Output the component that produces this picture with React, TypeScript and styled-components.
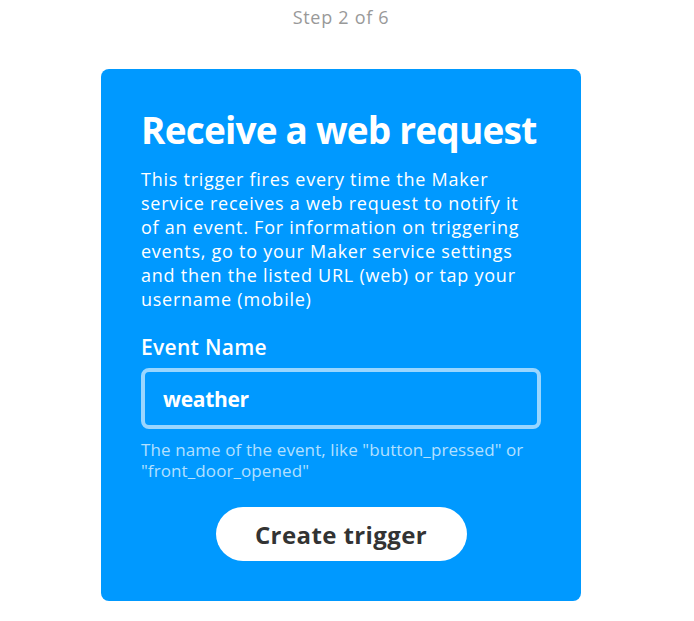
import React from 'react';
import styled, { createGlobalStyle } from 'styled-components';

const GlobalStyle = createGlobalStyle`
  html, body {
    margin: 0;
    padding: 0;
    background: #ffffff;
  }
  body {
    font-family: "Open Sans", Lato, sans-serif;
    -webkit-font-smoothing: antialiased;
  }
`;

const Page = styled.div`
  display: flex;
  flex-direction: column;
  align-items: center;
  width: 682px;
`;

const StepLabel = styled.div`
  color: #999999;
  font-size: 18px;
  font-weight: 500;
  letter-spacing: 0.7px;
  line-height: 24px;
  padding-top: 5px;
  height: 69px;
  box-sizing: border-box;
`;

const Card = styled.div`
  box-sizing: border-box;
  width: 480px;
  background: #0099ff;
  border-radius: 8px;
  padding: 40px 40px 40px;
  color: #ffffff;
  display: flex;
  flex-direction: column;
`;

const Title = styled.h1`
  margin: 0;
  font-size: 37px;
  font-weight: 700;
  line-height: 42px;
  letter-spacing: -0.8px;
`;

const Description = styled.p`
  margin: 16px 0 0;
  font-size: 18px;
  font-weight: 500;
  letter-spacing: 0.75px;
  line-height: 24px;
`;

const FieldLabel = styled.label`
  display: block;
  margin-top: 22px;
  font-size: 21px;
  font-weight: 600;
  letter-spacing: 0.3px;
  line-height: 28px;
`;

const Input = styled.input`
  box-sizing: border-box;
  margin-top: 7px;
  width: 400px;
  height: 61px;
  border: 4px solid #99d6ff;
  border-radius: 8px;
  background: #0099ff;
  color: #ffffff;
  font-family: inherit;
  font-size: 21px;
  font-weight: 700;
  letter-spacing: -0.3px;
  padding: 0 18px;
  outline: none;
`;

const Hint = styled.p`
  margin: 10px 0 0;
  color: #b3e0ff;
  font-size: 17px;
  letter-spacing: 0.1px;
  line-height: 21px;
`;

const Actions = styled.div`
  display: flex;
  justify-content: center;
  margin-top: 26px;
`;

const PrimaryButton = styled.button`
  box-sizing: border-box;
  width: 251px;
  height: 54px;
  border: none;
  border-radius: 27px;
  background: #ffffff;
  color: #333333;
  font-family: inherit;
  font-size: 24px;
  font-weight: 700;
  letter-spacing: 0.4px;
  cursor: pointer;
`;

export default function App(): JSX.Element {
  return (
    <>
      <GlobalStyle />
      <Page>
        <StepLabel>Step 2 of 6</StepLabel>
        <Card>
          <Title>Receive a web request</Title>
          <Description>
            This trigger fires every time the Maker service receives a web
            request to notify it of an event. For information on triggering
            events, go to your Maker service settings and then the listed URL
            (web) or tap your username (mobile)
          </Description>
          <FieldLabel>Event Name</FieldLabel>
          <Input defaultValue="weather" />
          <Hint>
            The name of the event, like "button_pressed" or
            "front_door_opened"
          </Hint>
          <Actions>
            <PrimaryButton>Create trigger</PrimaryButton>
          </Actions>
        </Card>
      </Page>
    </>
  );
}
